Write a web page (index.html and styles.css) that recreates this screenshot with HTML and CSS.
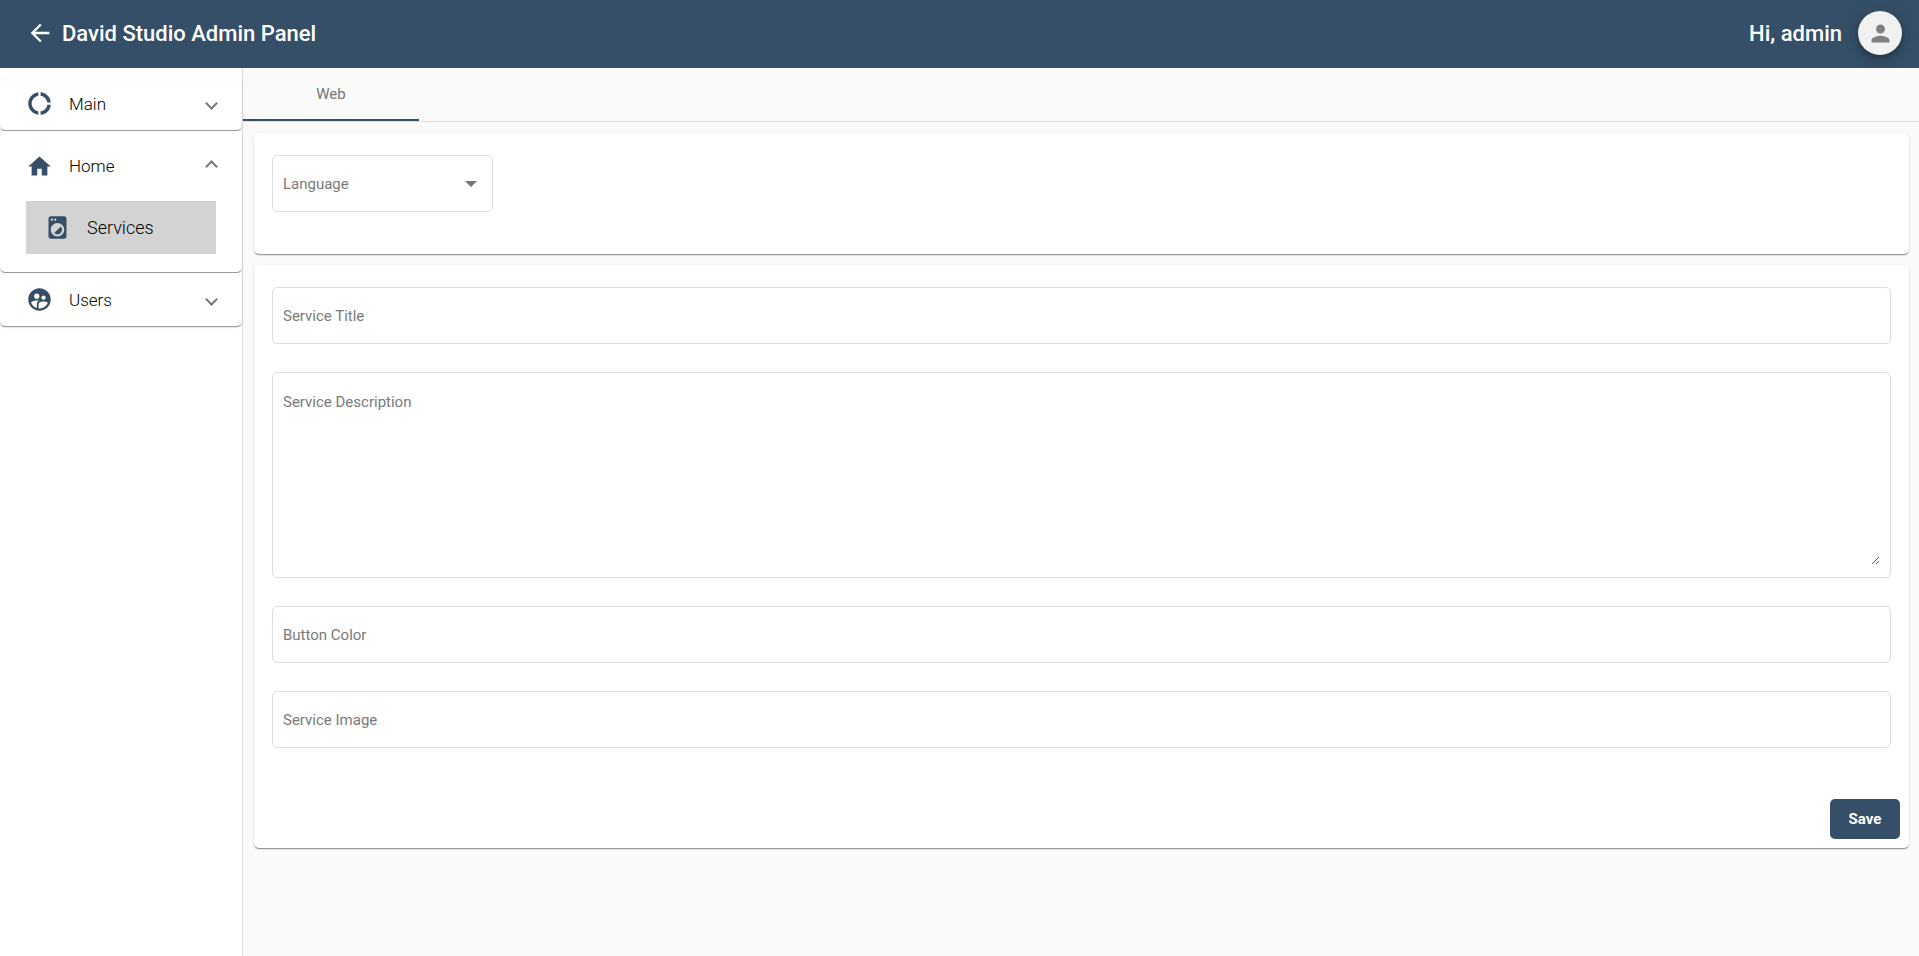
FILE: index.html
```html
<!DOCTYPE html>
<html lang="en">
<head>
<meta charset="utf-8">
<title>David Studio Admin Panel</title>
<link rel="stylesheet" href="styles.css">
</head>
<body>

<header class="toolbar">
	<a class="back" href="#" aria-label="Back">
		<svg width="28" height="28" viewBox="0 0 24 24"><path d="M20 11H7.83l5.59-5.59L12 4l-8 8 8 8 1.41-1.41L7.83 13H20v-2z"/></svg>
	</a>
	<h1 class="title">David Studio Admin Panel</h1>
	<span class="greeting">Hi, admin</span>
	<button class="avatar" type="button" aria-label="Account">
		<svg width="27" height="27" viewBox="0 0 24 24"><path d="M12 12c2.21 0 4-1.79 4-4s-1.79-4-4-4-4 1.79-4 4 1.79 4 4 4zm0 2c-2.67 0-8 1.34-8 4v2h16v-2c0-2.66-5.33-4-8-4z"/></svg>
	</button>
</header>

<div class="container">
	<nav class="sidenav">
		<details class="panel">
			<summary>
				<svg class="icon" viewBox="0 0 24 24"><path d="M11 5.08V2c-5 .5-9 4.81-9 10s4 9.5 9 10v-3.08c-3-.48-6-3.4-6-6.92s3-6.44 6-6.92zM18.97 11H22c-.47-5-4-8.53-9-9v3.08C16 5.51 18.54 8 18.97 11zM13 18.92V22c5-.47 8.53-4 9-9h-3.03c-.43 3-2.97 5.49-5.97 5.92z"/></svg>
				<span class="panel_title">Main</span>
				<span class="arrow"></span>
			</summary>
		</details>
		<details class="panel" open>
			<summary>
				<svg class="icon" viewBox="0 0 24 24"><path d="M10 20v-6h4v6h5v-8h3L12 3 2 12h3v8z"/></svg>
				<span class="panel_title">Home</span>
				<span class="arrow"></span>
			</summary>
			<div class="panel_body">
				<a class="nav_item" href="#">
					<svg class="icon" viewBox="0 0 24 24"><path d="M9.17 16.83c1.56 1.56 4.1 1.56 5.66 0 1.56-1.56 1.56-4.1 0-5.66l-5.66 5.66zM18 2.01L6 2c-1.11 0-2 .89-2 2v16c0 1.11.89 2 2 2h12c1.11 0 2-.89 2-2V4c0-1.11-.89-1.99-2-1.99zM10 4c.55 0 1 .45 1 1s-.45 1-1 1-1-.45-1-1 .45-1 1-1zM7 4c.55 0 1 .45 1 1s-.45 1-1 1-1-.45-1-1 .45-1 1-1zm5 16c-3.31 0-6-2.69-6-6s2.69-6 6-6 6 2.69 6 6-2.69 6-6 6z"/></svg>
					<span>Services</span>
				</a>
			</div>
		</details>
		<details class="panel">
			<summary>
				<svg class="icon" viewBox="0 0 24 24"><path d="M11.99 2c-5.52 0-10 4.48-10 10s4.48 10 10 10 10-4.48 10-10-4.48-10-10-10zm3.61 6.34c1.07 0 1.93.86 1.93 1.93 0 1.07-.86 1.93-1.93 1.93-1.07 0-1.93-.86-1.93-1.93-.01-1.07.86-1.93 1.93-1.93zm-6-1.58c1.3 0 2.36 1.06 2.36 2.36 0 1.3-1.06 2.36-2.36 2.36s-2.36-1.06-2.36-2.36c0-1.31 1.05-2.36 2.36-2.36zm0 9.13v3.75c-2.4-.75-4.3-2.6-5.14-4.96 1.05-1.12 3.67-1.69 5.14-1.69.53 0 1.2.08 1.9.22-1.64.87-1.9 2.02-1.9 2.68zM11.99 20c-.27 0-.53-.01-.79-.04v-4.07c0-1.42 2.94-2.13 4.4-2.13 1.07 0 2.92.39 3.84 1.15-1.17 2.97-4.06 5.09-7.45 5.09z"/></svg>
				<span class="panel_title">Users</span>
				<span class="arrow"></span>
			</summary>
		</details>
	</nav>

	<main class="content">
		<div class="tabs" role="tablist">
			<button class="tab active" type="button" role="tab" aria-selected="true">Web</button>
		</div>
		<form class="forms">
			<section class="card">
				<div class="field select_field">
					<label for="language">Language</label>
					<select id="language"><option value=""></option></select>
				</div>
			</section>
			<section class="card">
				<div class="field">
					<label for="service_title">Service Title</label>
					<input type="text" id="service_title">
				</div>
				<div class="field area_field">
					<label for="service_description">Service Description</label>
					<textarea id="service_description"></textarea>
				</div>
				<div class="field">
					<label for="button_color">Button Color</label>
					<input type="text" id="button_color">
				</div>
				<div class="field">
					<label for="service_image">Service Image</label>
					<input type="text" id="service_image">
				</div>
				<div class="actions">
					<button class="save" type="button">Save</button>
				</div>
			</section>
		</form>
	</main>
</div>

</body>
</html>
```
FILE: styles.css
```css
* {
	box-sizing:border-box;
}
body {
	margin:0;
	min-height:100vh;
	display:flex;
	flex-direction:column;
	background-color:#fafafa;
	font-family:Roboto, "Liberation Sans", sans-serif;
	font-size:15px;
	color:#111111;
}
button, input, select, textarea {
	font:inherit;
	color:inherit;
}
svg {
	display:block;
	fill:currentColor;
}

/* top bar */
.toolbar {
	display:flex;
	align-items:center;
	height:68px;
	padding:0 17px 2px 26px;
	background-color:#354f68;
	color:#ffffff;
	font-size:22px;
	font-weight:500;
}
.back {
	color:inherit;
	margin-right:8px;
}
.title {
	margin:0;
	font-size:inherit;
	font-weight:inherit;
}
.greeting {
	margin-left:auto;
	margin-right:16px;
}
.avatar {
	display:flex;
	align-items:center;
	justify-content:center;
	width:44px;
	height:44px;
	padding:0;
	border:none;
	border-radius:50%;
	background-color:#f1f1f1;
	color:#808080;
	box-shadow:0 3px 5px -1px rgba(0,0,0,.2), 0 6px 10px rgba(0,0,0,.14), 0 1px 18px rgba(0,0,0,.12);
	cursor:pointer;
}

/* side menu */
.container {
	display:flex;
	flex:1;
}
.sidenav {
	width:243px;
	padding-top:9px;
	border-right:1px solid #dddddd;
	background-color:#ffffff;
}
.panel {
	margin-bottom:1px;
	border-radius:5px;
	background-color:#ffffff;
	font-size:17px;
	font-weight:300;
	color:#000000;
}
.panel, .card {
	box-shadow:0 2px 1px -1px rgba(0,0,0,.2), 0 1px 1px rgba(0,0,0,.2), 0 1px 3px rgba(0,0,0,.12);
}
summary {
	display:flex;
	align-items:center;
	height:53px;
	padding:0 24px 0 26px;
	list-style:none;
	cursor:pointer;
}
.panel[open] summary {
	height:70px;
}
.icon {
	width:27px;
	height:27px;
	margin-right:16px;
	color:#354f68;
}
.arrow {
	display:flex;
	margin-left:auto;
	padding:2px;
}
.arrow::after {
	content:"";
	width:7px;
	height:7px;
	border:solid #757575;
	border-width:0 2px 2px 0;
	transform:rotate(45deg);
}
.panel[open] .arrow {
	transform:rotate(180deg);
}
.panel_body {
	padding:0 26px 18px;
}
.nav_item {
	display:flex;
	align-items:center;
	height:53px;
	padding:0 18px;
	background-color:#d3d3d3;
	color:inherit;
	font-size:18px;
	text-decoration:none;
}

/* page */
.content {
	flex:1;
}
.tabs {
	border-bottom:1px solid #dddddd;
}
.tab {
	display:block;
	width:176px;
	height:53px;
	border:none;
	background:none;
	color:#757575;
	cursor:pointer;
}
.tab.active {
	border-bottom:2px solid #354f68;
}
.forms {
	padding:11px 10px 11px 11px;
}
.card {
	display:flex;
	flex-direction:column;
	gap:28px;
	padding:22px 18px;
	margin-bottom:11px;
	border-radius:5px;
	background-color:#ffffff;
}
.card:first-child {
	padding-bottom:42px;
}
.card:last-child {
	padding-bottom:9px;
}
.field {
	display:grid;
	border:1px solid #dddddd;
	border-radius:5px;
	color:#7a7a7a;
}
.field label {
	grid-area:1 / 1;
	align-self:center;
	padding-left:10px;
	pointer-events:none;
}
.field input, .field select, .field textarea {
	grid-area:1 / 1;
	width:100%;
	height:55px;
	margin:0;
	padding:0 10px;
	border:none;
	outline:none;
	background:none;
}
.select_field {
	width:221px;
}
.select_field select {
	appearance:none;
}
.select_field::after {
	content:"";
	grid-area:1 / 1;
	place-self:center end;
	margin-right:15px;
	border:6px solid transparent;
	border-top-color:#757575;
	border-bottom:none;
	pointer-events:none;
}
.area_field {
	padding:10px 10px 12px 0;
}
.area_field label {
	align-self:start;
	padding-top:10px;
}
.area_field textarea {
	height:182px;
	padding:10px;
	resize:vertical;
}
.actions {
	display:flex;
	justify-content:flex-end;
	margin-top:23px;
	margin-right:-9px;
}
.save {
	width:70px;
	height:40px;
	border:none;
	border-radius:5px;
	background-color:#354f68;
	color:#ffffff;
	font-weight:700;
	cursor:pointer;
}
```
